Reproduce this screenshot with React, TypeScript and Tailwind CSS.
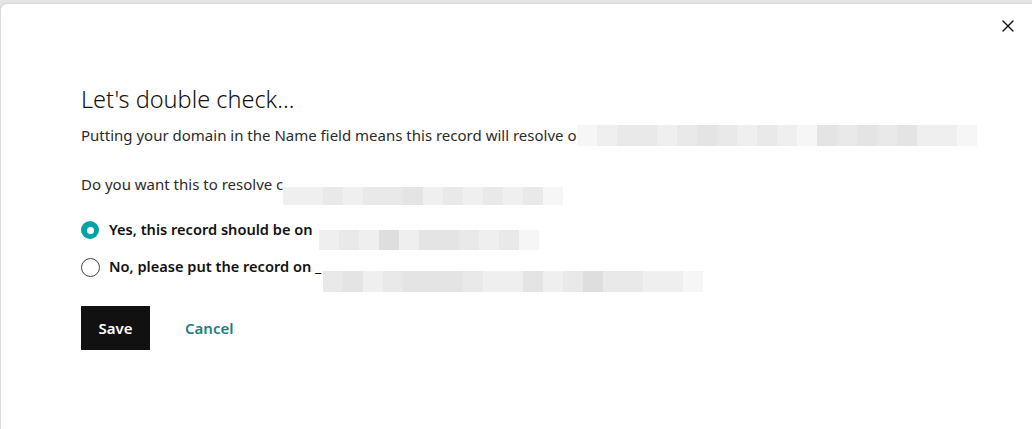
import { X } from "lucide-react";

const font = { fontFamily: '"Noto Sans", Arial, sans-serif' };

// pixelated (redacted) blocks
function Mosaic({ cells, className }: { cells: string[]; className: string }) {
  return (
    <span className={`inline-flex shrink-0 ${className}`}>
      {cells.map((c, i) => (
        <span key={i} className={`h-full w-[20px] ${c}`} />
      ))}
    </span>
  );
}

const A = "bg-[#e9e9e9]";
const B = "bg-[#e4e4e4]";
const C = "bg-[#efefef]";
const D = "bg-[#f6f6f6]";
const E = "bg-[#dedede]";

export default function App() {
  return (
    <div className="h-[429px] w-[1032px] overflow-hidden bg-[#e5e5e5] pt-[4px] pl-[1px]" style={font}>
      <div className="relative h-full rounded-tl-md bg-white shadow-[0_0_3px_rgba(0,0,0,0.15)]">
        <button className="absolute right-[14px] top-[12px] text-[#111]">
          <X size={20} strokeWidth={1.6} />
        </button>

        <div className="pl-20 pt-[80px] text-[#111]">
          <h2 className="h-[30px] text-[23.5px] font-light leading-[30px] text-[#111]">Let's double check...</h2>

          <div className="mt-[10px] flex h-[22px] items-center text-[15px] text-[#2b2b2b]">
            <span>Putting your domain in the Name field means this record will resolve o</span>
            <Mosaic className="h-[21px] ml-[1px]" cells={[D, C, A, A, C, A, B, A, C, A, C, D, B, A, B, A, B, C, C, D]} />
          </div>

          <div className="mt-[27px] flex h-[22px] items-center text-[15px] text-[#2b2b2b]">
            <span>Do you want this to resolve c</span>
            <Mosaic className="h-[18px] translate-y-[12px]" cells={[C, C, A, C, A, A, B, C, A, C, A, C, A, D]} />
          </div>

          <div className="mt-[24px] flex flex-col gap-[15px]">
            <label className="flex h-[22px] items-center text-[14.6px] font-semibold text-[#111]">
              <span className="mr-[10px] flex h-[18px] w-[18px] items-center justify-center rounded-full bg-[#00a4a6]">
                <span className="h-[7px] w-[7px] rounded-full bg-white" />
              </span>
              <span>Yes, this record should be on</span>
              <Mosaic className="h-[20px] ml-[6px] translate-y-[10px]" cells={[C, A, C, E, C, B, B, A, C, A, D]} />
            </label>
            <label className="flex h-[22px] items-center text-[14.6px] font-semibold text-[#111]">
              <span className="mr-[9px] h-[19px] w-[19px] rounded-full border border-[#444] bg-white" />
              <span>No, please put the record on _</span>
              <Mosaic className="h-[21px] ml-[2px] translate-y-[14px]" cells={[A, B, C, A, B, B, B, A, C, C, B, C, A, E, A, A, C, C, D]} />
            </label>
          </div>

          <div className="mt-[28px] flex items-center gap-[35px]">
            <button className="h-[44px] w-[69px] bg-[#111] text-[15px] font-semibold text-white">Save</button>
            <button className="text-[15px] font-semibold text-[#1b7f80]">Cancel</button>
          </div>
        </div>
      </div>
    </div>
  );
}
